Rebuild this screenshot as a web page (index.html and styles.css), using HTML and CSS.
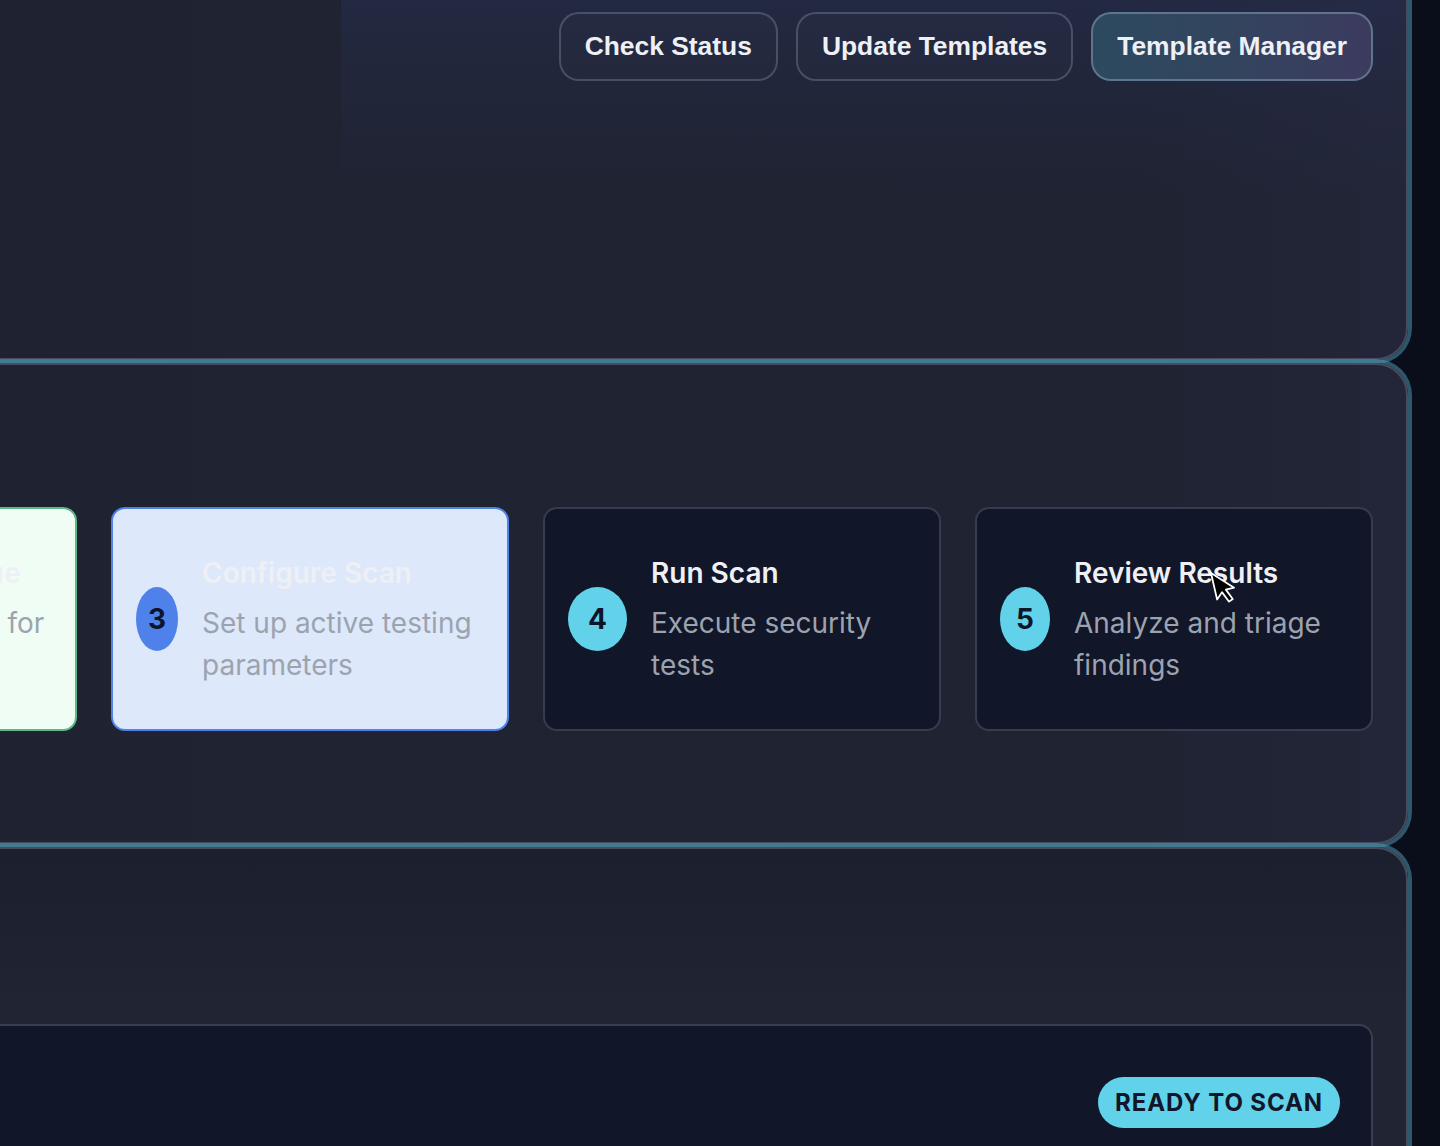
FILE: index.html
```html
<!DOCTYPE html>
<html lang="en">
<head>
<meta charset="utf-8">
<title>Active Scan</title>
<link rel="stylesheet" href="styles.css">
</head>
<body>
<main class="app">
  <section class="panel panel-top">
    <div class="header-left"></div>
    <div class="header-actions">
      <button class="btn">Check Status</button>
      <button class="btn">Update Templates</button>
      <button class="btn btn-primary">Template Manager</button>
    </div>
  </section>

  <section class="panel panel-steps">
    <div class="steps">
      <div class="step step-done">
        <div class="step-num num-1">1</div>
        <div class="step-body">
          <div class="step-title">Select Target</div>
          <div class="step-desc">Choose the application to scan</div>
        </div>
      </div>
      <div class="step step-done">
        <div class="step-num num-2">2</div>
        <div class="step-body">
          <div class="step-title">Choose Technique</div>
          <div class="step-desc">Choose test rules for the scan</div>
        </div>
      </div>
      <div class="step step-active">
        <div class="step-num num-3">3</div>
        <div class="step-body">
          <div class="step-title">Configure Scan</div>
          <div class="step-desc">Set up active testing parameters</div>
        </div>
      </div>
      <div class="step">
        <div class="step-num num-4">4</div>
        <div class="step-body">
          <div class="step-title">Run Scan</div>
          <div class="step-desc">Execute security tests</div>
        </div>
      </div>
      <div class="step">
        <div class="step-num num-5">5</div>
        <div class="step-body">
          <div class="step-title">Review Results</div>
          <div class="step-desc">Analyze and triage findings</div>
        </div>
      </div>
    </div>
  </section>

  <section class="panel panel-status">
    <div class="status-card">
      <span class="badge">READY TO SCAN</span>
    </div>
  </section>
</main>

<svg class="cursor" width="40" height="40" viewBox="0 0 40 40" aria-hidden="true">
  <g transform="translate(3 3) rotate(-13) scale(1.6)">
    <path d="M0 0 L0 17 L4 13.2 L7 20 L9.6 18.9 L6.7 12.2 L12 12.2 Z" fill="#000" stroke="#fff" stroke-width="1.1" stroke-linejoin="round"/>
  </g>
</svg>
</body>
</html>
```

FILE: styles.css
```css
* {
  box-sizing: border-box;
  margin: 0;
  padding: 0;
}

body {
  position: relative;
  width: 1440px;
  height: 1146px;
  overflow: hidden;
  background: linear-gradient(90deg, #0d1120 0%, #0a0e1b 100%);
  font-family: Inter, "Noto Sans", sans-serif;
}

.app {
  width: 2196px;
  margin-left: -788px;
  margin-top: -60px;
  display: flex;
  flex-direction: column;
  gap: 3px;
}

.panel {
  position: relative;
  border: 2px solid #464b5e;
  border-radius: 32px;
  background: linear-gradient(90deg, #1f2331 0%, #1f2332 88%, #232638 100%);
  box-shadow: 0 0 0 4px rgba(80, 160, 185, 0.5);
}

/* header panel */
.panel-top {
  height: 420px;
  display: grid;
  grid-template-columns: 1127px 1fr;
  align-items: start;
}

.header-actions {
  height: 258px;
  padding: 70px 33px 0 0;
  display: flex;
  justify-content: flex-end;
  align-items: flex-start;
  gap: 18px;
  background: linear-gradient(180deg, rgba(42, 52, 98, 0.45) 0%, rgba(42, 52, 98, 0.22) 45%, rgba(31, 35, 49, 0) 100%);
}

.btn {
  height: 69px;
  padding: 0 24px;
  border: 2px solid rgba(148, 163, 184, 0.32);
  border-radius: 20px;
  background: rgba(255, 255, 255, 0.01);
  color: #eef0f6;
  font-family: "Liberation Sans", Arial, sans-serif;
  font-weight: 700;
  font-size: 26.4px;
  display: flex;
  align-items: center;
  white-space: nowrap;
}

.btn-primary {
  background: linear-gradient(90deg, #2c4a5f 0%, #33445f 50%, #3b3b5e 100%);
  border-color: rgba(125, 150, 172, 0.6);
}

/* steps panel */
.panel-steps {
  padding: 142px 33px 111px;
}

.steps {
  display: grid;
  grid-template-columns: repeat(5, 398px);
  gap: 34px;
}

.step {
  height: 224px;
  border: 2px solid #363b4e;
  border-radius: 14px;
  background: #111628;
  display: flex;
  align-items: center;
  gap: 24px;
  padding: 0 23px;
}

.step-done {
  background: #effdf5;
  border-color: #5bbb87;
}

.step-active {
  background: #dde8fb;
  border-color: #4f81ea;
}

.step-num {
  flex-shrink: 0;
  height: 64px;
  border-radius: 50%;
  background: #61d2ea;
  color: #0f1528;
  font-weight: 700;
  font-size: 28px;
  display: flex;
  align-items: center;
  justify-content: center;
}

.step-done .step-num {
  background: #4ade80;
}

.step-active .step-num {
  background: #4f81ea;
}

.num-1 { width: 50px; }
.num-2 { width: 40px; }
.num-3 { width: 42px; }
.num-4 { width: 59px; }
.num-5 { width: 50px; }

.step-body {
  flex: 1;
  min-width: 0;
}

.step-title {
  font-size: 28px;
  font-weight: 600;
  line-height: 42px;
  color: #eef0f5;
  white-space: nowrap;
}

.step-desc {
  margin-top: 8px;
  font-size: 28px;
  line-height: 42px;
  color: #9ca3af;
}

/* status panel */
.panel-status {
  height: 520px;
  padding: 175px 33px 0;
  background: linear-gradient(180deg, #1c1f2d 0%, #202433 30%, #202433 100%);
}

.status-card {
  height: 400px;
  border: 2px solid #383d50;
  border-radius: 14px;
  background: #111628;
  padding: 51px 31px 0;
  display: flex;
  justify-content: flex-end;
  align-items: flex-start;
}

.badge {
  height: 51px;
  padding: 0 17px;
  border-radius: 26px;
  background: #61d2ea;
  color: #111628;
  font-weight: 700;
  font-size: 24px;
  letter-spacing: 0.9px;
  display: flex;
  align-items: center;
}

.cursor {
  position: absolute;
  left: 1208px;
  top: 570px;
}
```
